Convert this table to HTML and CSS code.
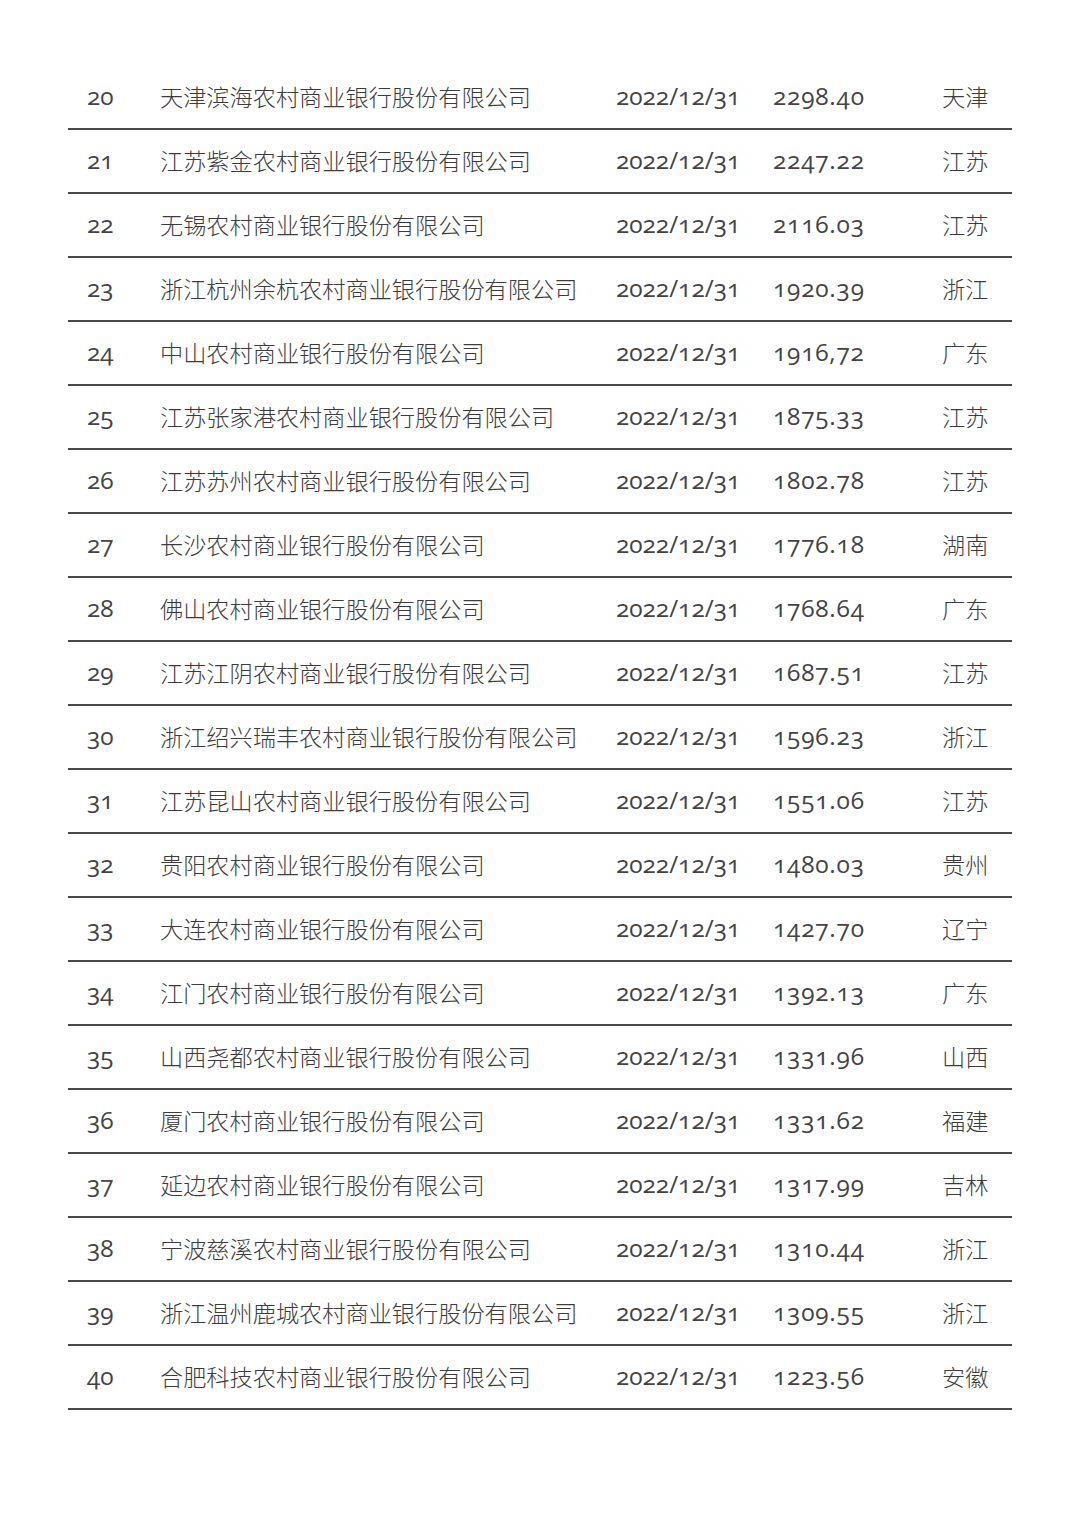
FILE: index.html
```html
<!DOCTYPE html>
<html><head><meta charset="utf-8"><link rel="stylesheet" href="styles.css"></head>
<body>
<div class="table">
  <div class="row"><span class="no">20</span><span class="name">天津滨海农村商业银行股份有限公司</span><span class="date">2022/12/31</span><span class="val">2298.40</span><span class="prov">天津</span></div>
  <div class="row"><span class="no">21</span><span class="name">江苏紫金农村商业银行股份有限公司</span><span class="date">2022/12/31</span><span class="val">2247.22</span><span class="prov">江苏</span></div>
  <div class="row"><span class="no">22</span><span class="name">无锡农村商业银行股份有限公司</span><span class="date">2022/12/31</span><span class="val">2116.03</span><span class="prov">江苏</span></div>
  <div class="row"><span class="no">23</span><span class="name">浙江杭州余杭农村商业银行股份有限公司</span><span class="date">2022/12/31</span><span class="val">1920.39</span><span class="prov">浙江</span></div>
  <div class="row"><span class="no">24</span><span class="name">中山农村商业银行股份有限公司</span><span class="date">2022/12/31</span><span class="val">1916,72</span><span class="prov">广东</span></div>
  <div class="row"><span class="no">25</span><span class="name">江苏张家港农村商业银行股份有限公司</span><span class="date">2022/12/31</span><span class="val">1875.33</span><span class="prov">江苏</span></div>
  <div class="row"><span class="no">26</span><span class="name">江苏苏州农村商业银行股份有限公司</span><span class="date">2022/12/31</span><span class="val">1802.78</span><span class="prov">江苏</span></div>
  <div class="row"><span class="no">27</span><span class="name">长沙农村商业银行股份有限公司</span><span class="date">2022/12/31</span><span class="val">1776.18</span><span class="prov">湖南</span></div>
  <div class="row"><span class="no">28</span><span class="name">佛山农村商业银行股份有限公司</span><span class="date">2022/12/31</span><span class="val">1768.64</span><span class="prov">广东</span></div>
  <div class="row"><span class="no">29</span><span class="name">江苏江阴农村商业银行股份有限公司</span><span class="date">2022/12/31</span><span class="val">1687.51</span><span class="prov">江苏</span></div>
  <div class="row"><span class="no">30</span><span class="name">浙江绍兴瑞丰农村商业银行股份有限公司</span><span class="date">2022/12/31</span><span class="val">1596.23</span><span class="prov">浙江</span></div>
  <div class="row"><span class="no">31</span><span class="name">江苏昆山农村商业银行股份有限公司</span><span class="date">2022/12/31</span><span class="val">1551.06</span><span class="prov">江苏</span></div>
  <div class="row"><span class="no">32</span><span class="name">贵阳农村商业银行股份有限公司</span><span class="date">2022/12/31</span><span class="val">1480.03</span><span class="prov">贵州</span></div>
  <div class="row"><span class="no">33</span><span class="name">大连农村商业银行股份有限公司</span><span class="date">2022/12/31</span><span class="val">1427.70</span><span class="prov">辽宁</span></div>
  <div class="row"><span class="no">34</span><span class="name">江门农村商业银行股份有限公司</span><span class="date">2022/12/31</span><span class="val">1392.13</span><span class="prov">广东</span></div>
  <div class="row"><span class="no">35</span><span class="name">山西尧都农村商业银行股份有限公司</span><span class="date">2022/12/31</span><span class="val">1331.96</span><span class="prov">山西</span></div>
  <div class="row"><span class="no">36</span><span class="name">厦门农村商业银行股份有限公司</span><span class="date">2022/12/31</span><span class="val">1331.62</span><span class="prov">福建</span></div>
  <div class="row"><span class="no">37</span><span class="name">延边农村商业银行股份有限公司</span><span class="date">2022/12/31</span><span class="val">1317.99</span><span class="prov">吉林</span></div>
  <div class="row"><span class="no">38</span><span class="name">宁波慈溪农村商业银行股份有限公司</span><span class="date">2022/12/31</span><span class="val">1310.44</span><span class="prov">浙江</span></div>
  <div class="row"><span class="no">39</span><span class="name">浙江温州鹿城农村商业银行股份有限公司</span><span class="date">2022/12/31</span><span class="val">1309.55</span><span class="prov">浙江</span></div>
  <div class="row"><span class="no">40</span><span class="name">合肥科技农村商业银行股份有限公司</span><span class="date">2022/12/31</span><span class="val">1223.56</span><span class="prov">安徽</span></div>
</div>
</body></html>
```
FILE: styles.css
```css
html,body{margin:0;padding:0;background:#fff}
body{width:1080px;height:1528px;overflow:hidden}
.table{margin:66px 0 0 68px;width:944px}
.row{display:grid;grid-template-columns:92px 456px 157px 169px 1fr;align-items:center;box-sizing:border-box;height:64px;padding-bottom:3px;border-bottom:2px solid #4a4a4a;color:#333}
.no,.date,.val{font-family:"Open Sans","Noto Sans CJK SC",sans-serif;font-size:24.4px;font-variant-numeric:oldstyle-nums;font-feature-settings:"onum" 1;color:#444}
.val{letter-spacing:0.8px}
.no{padding-left:19px}
.name,.prov{font-family:"Noto Sans CJK SC",sans-serif;font-weight:300;font-size:23.2px;color:#3c3c3c}
```
